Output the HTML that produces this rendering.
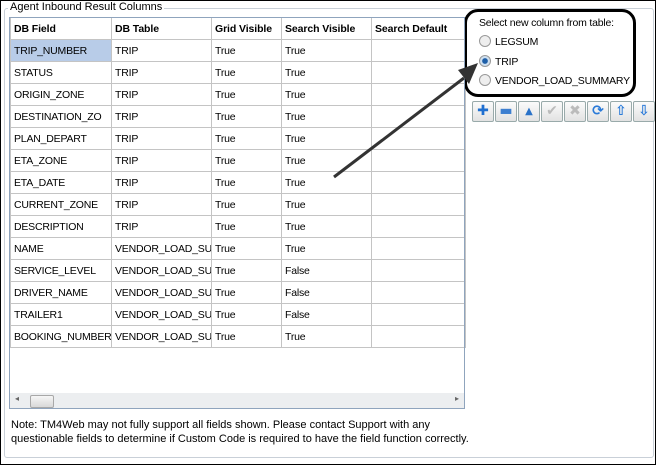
<html><head><style>
body{margin:0;width:656px;height:465px;background:#fff;position:relative;overflow:hidden;font-family:"Liberation Sans",sans-serif;font-size:11px;color:#000}
.frame{position:absolute;left:0;top:0;width:654px;height:463px;border:1px solid #000}
.grp{position:absolute;left:4px;top:8px;width:648px;height:448px;border:1px solid #c9d0d8;border-radius:3px}
.legend{position:absolute;left:8px;top:1px;background:#fff;padding:0 2px;font-size:11px}
table{position:absolute;left:10px;top:17px;border-collapse:collapse;table-layout:fixed;width:455px}
tr{height:22px}
td,th{border:1px solid #c4c4c4;padding:0 0 0 3px;text-align:left;white-space:nowrap;overflow:hidden;font-size:10.5px;letter-spacing:-0.2px;box-sizing:border-box}
th{font-weight:bold;background:#fff;letter-spacing:-0.1px}
.tbl{position:absolute;left:9px;top:17px;width:456px;height:392px;border:1px solid #8fa4bd;box-sizing:border-box;z-index:2}
.sb{position:absolute;left:10px;top:393px;width:454px;height:15px;background:#eceef0}
.thumb{position:absolute;left:20px;top:2px;width:22px;height:11px;border:1px solid #a8a8a8;background:linear-gradient(#f6f6f6,#d8d8d8);border-radius:2px}
.note{position:absolute;left:11px;top:418px;font-size:11px;line-height:14px}
.rbox{position:absolute;left:464px;top:9px;width:166px;height:82px;border:3px solid #000;border-radius:14px}
.rbox div{position:absolute;left:12px;font-size:10.5px;letter-spacing:-0.2px;white-space:nowrap}
.rad{display:inline-block;width:10px;height:10px;border:1px solid #999;border-radius:50%;background:#eee;vertical-align:-2px;margin-right:4px}
.btn{position:absolute;top:101px;width:20px;height:19px;border:1px solid #9aa;border-radius:2px;background:linear-gradient(#fbfbfb,#e2e2e2);text-align:center;font-size:14px;line-height:19px;font-weight:bold;font-family:"DejaVu Sans",sans-serif}
</style></head><body>
<div class="frame"></div>
<div class="grp"></div>
<div class="legend">Agent Inbound Result Columns</div>
<div class="tbl"></div>
<table>
<colgroup><col style="width:101px"><col style="width:100px"><col style="width:70px"><col style="width:90px"><col style="width:94px"></colgroup>
<tr><th>DB Field</th><th>DB Table</th><th>Grid Visible</th><th>Search Visible</th><th>Search Default</th></tr>
<tr><td style="background:#b8cce8">TRIP_NUMBER</td><td>TRIP</td><td>True</td><td>True</td><td></td></tr>
<tr><td>STATUS</td><td>TRIP</td><td>True</td><td>True</td><td></td></tr>
<tr><td>ORIGIN_ZONE</td><td>TRIP</td><td>True</td><td>True</td><td></td></tr>
<tr><td>DESTINATION_ZO</td><td>TRIP</td><td>True</td><td>True</td><td></td></tr>
<tr><td>PLAN_DEPART</td><td>TRIP</td><td>True</td><td>True</td><td></td></tr>
<tr><td>ETA_ZONE</td><td>TRIP</td><td>True</td><td>True</td><td></td></tr>
<tr><td>ETA_DATE</td><td>TRIP</td><td>True</td><td>True</td><td></td></tr>
<tr><td>CURRENT_ZONE</td><td>TRIP</td><td>True</td><td>True</td><td></td></tr>
<tr><td>DESCRIPTION</td><td>TRIP</td><td>True</td><td>True</td><td></td></tr>
<tr><td>NAME</td><td>VENDOR_LOAD_SU</td><td>True</td><td>True</td><td></td></tr>
<tr><td>SERVICE_LEVEL</td><td>VENDOR_LOAD_SU</td><td>True</td><td>False</td><td></td></tr>
<tr><td>DRIVER_NAME</td><td>VENDOR_LOAD_SU</td><td>True</td><td>False</td><td></td></tr>
<tr><td>TRAILER1</td><td>VENDOR_LOAD_SU</td><td>True</td><td>False</td><td></td></tr>
<tr><td>BOOKING_NUMBER</td><td>VENDOR_LOAD_SU</td><td>True</td><td>True</td><td></td></tr>
</table>
<div class="sb"><span style="position:absolute;left:5px;top:1px;font-size:8px;color:#666">◂</span><div class="thumb"></div><span style="position:absolute;right:5px;top:1px;font-size:8px;color:#666">▸</span></div>
<div class="note">Note: TM4Web may not fully support all fields shown. Please contact Support with any<br>questionable fields to determine if Custom Code is required to have the field function correctly.</div>
<div class="rbox">
<div style="top:5px">Select new column from table:</div>
<div style="top:23px"><span class="rad"></span>LEGSUM</div>
<div style="top:43px"><span class="rad" style="background:radial-gradient(#1e5fa8 35%,#cfe0f0 45%)"></span>TRIP</div>
<div style="top:62px"><span class="rad"></span>VENDOR_LOAD_SUMMARY</div>
</div>
<svg style="position:absolute;left:0;top:0;z-index:3" width="656" height="465"><line x1="334" y1="177" x2="464" y2="78" stroke="#333" stroke-width="3"/><polygon points="478,63 458,70 469,84" fill="#333"/></svg>
<div class="btn" style="left:472px;color:#1f6fd0">✚</div>
<div class="btn" style="left:495px;color:#3d7fd0">▬</div>
<div class="btn" style="left:518px;color:#2a72c8;font-size:10px">▲</div>
<div class="btn" style="left:541px;color:#bbb">✔</div>
<div class="btn" style="left:564px;color:#bbb">✖</div>
<div class="btn" style="left:587px;color:#2a7ad8">⟳</div>
<div class="btn" style="left:610px;color:#2a7ad8">⇧</div>
<div class="btn" style="left:633px;color:#2a7ad8">⇩</div>
</body></html>
